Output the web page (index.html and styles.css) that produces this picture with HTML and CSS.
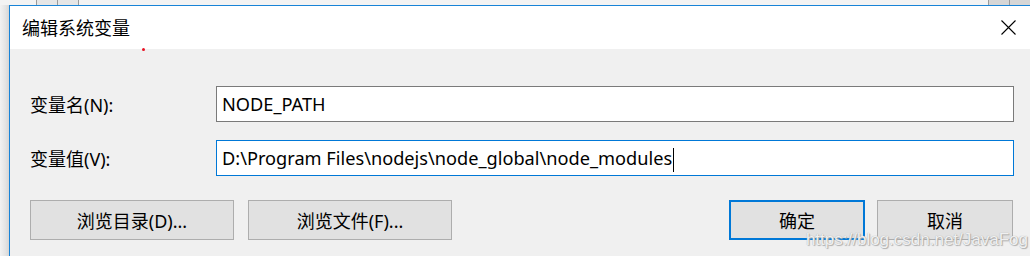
FILE: index.html
```html
<!DOCTYPE html>
<html lang="zh-CN">
<head>
  <meta charset="UTF-8">
  <title>编辑系统变量</title>
  <link rel="stylesheet" href="styles.css">
</head>
<body>
  <div class="taskbar">
    <span class="cell wide"></span>
    <span class="cell"></span>
    <span class="cell"></span>
    <span class="fill"></span>
    <span class="cell dark"></span>
    <span class="cell dark"></span>
  </div>
  <div class="screen">
    <div class="edge"></div>
    <div class="dialog">
      <div class="titlebar">
        <span class="title">编辑系统变量</span>
        <svg class="close" width="15" height="15" viewBox="0 0 15 15">
          <path d="M0.5 0.5 L14.5 14.5 M14.5 0.5 L0.5 14.5" stroke="#000" stroke-width="1.1" fill="none"/>
        </svg>
      </div>
      <div class="content">
        <span class="dot"></span>
        <div class="row first">
          <label class="label">变量名(N):</label>
          <div class="field">NODE_PATH</div>
        </div>
        <div class="row">
          <label class="label">变量值(V):</label>
          <div class="field focus">D:\Program Files\nodejs\node_global\node_modules<span class="caret"></span></div>
        </div>
        <div class="buttons">
          <button class="btn">浏览目录(D)...</button>
          <button class="btn">浏览文件(F)...</button>
          <span class="spacer"></span>
          <button class="btn small default">确定</button>
          <button class="btn small">取消</button>
        </div>
        <div class="watermark">https://blog.csdn.net/JavaFog</div>
      </div>
    </div>
  </div>
</body>
</html>
```

FILE: styles.css
```css
body {
  margin: 0;
  height: 256px;
  overflow: hidden;
  background: #f0f0f0;
  font-family: "Noto Sans", "Noto Sans CJK SC", sans-serif;
  color: #000;
}
.taskbar {
  display: flex;
  height: 5px;
  background: #f3f3f3;
}
.taskbar .cell {
  width: 20px;
  border-left: 1px solid #9a9a9a;
  background: #e6e6e6;
}
.taskbar .cell.wide {
  width: 36px;
  border: none;
  background: #f3f3f3;
}
.taskbar .cell.dark {
  background: #d6d6d6;
}
.taskbar .fill {
  flex: 1;
  border-left: 1px solid #9a9a9a;
  background: #f3f3f3;
}
.screen {
  display: flex;
  height: 251px;
}
.edge {
  width: 9px;
  background: linear-gradient(to right, #f2f2f2, #e4e4e4 60%, #d6d6d6);
}
.dialog {
  flex: 1;
  border-left: 1px solid #1883d7;
  border-top: 1px solid #1883d7;
  background: #f0f0f0;
  display: flex;
  flex-direction: column;
}
.titlebar {
  height: 43px;
  background: #fff;
  display: flex;
  align-items: center;
  padding-left: 12px;
  padding-right: 14px;
}
.title {
  flex: 1;
  font-size: 18px;
  padding-bottom: 2px;
}
.close {
  display: block;
  margin-bottom: 1px;
}
.content {
  position: relative;
  flex: 1;
  padding: 37px 16px 0 20px;
}
.dot {
  position: absolute;
  left: 132px;
  top: -1px;
  width: 3px;
  height: 3px;
  border-radius: 50%;
  background: #e81123;
}
.row {
  display: flex;
  align-items: center;
  margin-bottom: 18px;
}
.label {
  width: 186px;
  font-size: 18px;
}
.field {
  flex: 1;
  height: 34px;
  line-height: 34px;
  border: 1px solid #7a7a7a;
  background: #fff;
  padding-left: 5px;
  font-size: 18.2px;
  white-space: nowrap;
}
.field.focus {
  border-color: #0078d7;
}
.caret {
  display: inline-block;
  width: 1px;
  height: 24px;
  background: #000;
  vertical-align: middle;
  margin-left: 1px;
}
.buttons {
  display: flex;
  margin-top: 24px;
  padding-right: 1px;
}
.btn {
  width: 204px;
  height: 40px;
  margin-right: 14px;
  background: #e1e1e1;
  border: 1px solid #adadad;
  font-family: inherit;
  font-size: 18px;
  color: #000;
  padding: 0;
}
.btn.small {
  width: 136px;
  margin-right: 0;
}
.btn.default {
  border: 2px solid #0078d7;
  margin-right: 12px;
}
.spacer {
  flex: 1;
}
.watermark {
  position: absolute;
  right: 2px;
  bottom: 6px;
  font-family: "Liberation Sans", sans-serif;
  font-size: 17px;
  color: rgba(255, 255, 255, 0.85);
  text-shadow: 0 0 1px #9a9a9a, 1px 1px 1px #b0b0b0;
}
```
